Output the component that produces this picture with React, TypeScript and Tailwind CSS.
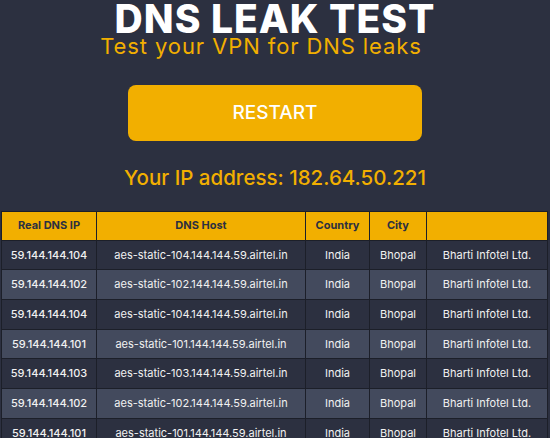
import React from 'react';

const rows = [
  { ip: '59.144.144.104', host: 'aes-static-104.144.144.59.airtel.in' },
  { ip: '59.144.144.102', host: 'aes-static-102.144.144.59.airtel.in' },
  { ip: '59.144.144.104', host: 'aes-static-104.144.144.59.airtel.in' },
  { ip: '59.144.144.101', host: 'aes-static-101.144.144.59.airtel.in' },
  { ip: '59.144.144.103', host: 'aes-static-103.144.144.59.airtel.in' },
  { ip: '59.144.144.102', host: 'aes-static-102.144.144.59.airtel.in' },
  { ip: '59.144.144.101', host: 'aes-static-101.144.144.59.airtel.in' },
];

const headers = ['Real DNS IP', 'DNS Host', 'Country', 'City', ''];
const widths = ['w-[95px]', 'w-[209px]', 'w-[64px]', 'w-[57px]', ''];

export default function App() {
  return (
    <div className="h-[438px] w-[550px] overflow-hidden bg-[#2c3040] font-['Inter',sans-serif]">
      <div className="flex flex-col items-center">
        <h1 className="text-[39px] font-extrabold leading-[37px] tracking-[1px] text-white">DNS LEAK TEST</h1>
        <p className="mr-[28px] text-[22px] leading-[18px] tracking-[0.9px] text-[#f2af00]">
          Test your VPN for DNS leaks
        </p>
        <button className="mt-[30px] h-[56px] w-[294px] rounded-lg bg-[#f2af00] text-[19px] font-medium text-white">
          RESTART
        </button>
        <p className="mt-[27px] text-[20.5px] leading-none font-medium text-[#f2af00]">
          Your IP address: 182.64.50.221
        </p>
      </div>
      <table className="ml-px mt-[22px] w-[547px] border-collapse text-center text-[11px]">
        <thead>
          <tr className="h-[29px] bg-[#f2af00] text-[#2c3040]">
            {headers.map((h, i) => (
              <th key={i} className={`border border-[#1c1f29] font-bold ${widths[i]}`}>
                {h}
              </th>
            ))}
          </tr>
        </thead>
        <tbody>
          {rows.map((r, i) => (
            <tr
              key={i}
              className={`h-[29.7px] text-[#f1f1f1] ${i % 2 === 1 ? 'bg-[#434a5d]' : 'bg-[#2c3040]'}`}
            >
              <td className="border border-[#1c1f29] font-medium">{r.ip}</td>
              <td className="border border-[#1c1f29]">{r.host}</td>
              <td className="border border-[#1c1f29]">India</td>
              <td className="border border-[#1c1f29]">Bhopal</td>
              <td className="border border-[#1c1f29]">Bharti Infotel Ltd.</td>
            </tr>
          ))}
        </tbody>
      </table>
    </div>
  );
}
